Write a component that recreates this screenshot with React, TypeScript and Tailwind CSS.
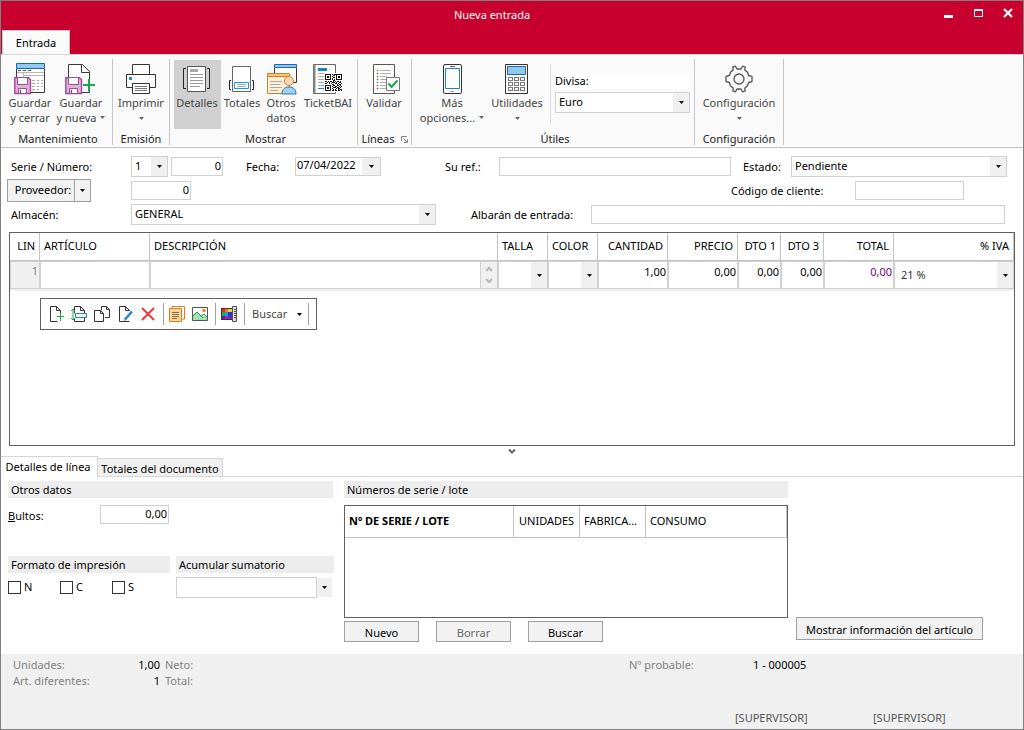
import React from "react";
import type { ReactNode } from "react";

const qrRows = [
  "11111101011111111",
  "10000100110100001",
  "10110101000101101",
  "10110100110101101",
  "10000101000100001",
  "11111101010111111",
  "00000000110000000",
  "11010110101011010",
  "00101001110100110",
  "11001010001101001",
  "00000001100010110",
  "11111100110011010",
  "10000101001100101",
  "10110100111011010",
  "10110101000101100",
  "10000100101001011",
  "11111101101101101",
];

function Caret({ className = "text-black" }: { className?: string }) {
  return (
    <svg aria-hidden="true" width="5" height="3" viewBox="0 0 5 3" className={`shrink-0 ${className}`}>
      <path d="M0 0h5L2.5 3z" fill="currentColor" />
    </svg>
  );
}

function Floppy() {
  return (
    <g stroke="#a0489c" fill="#deb3db">
      <path d="M.8 14.8h13.7l2 2v13.7H.8z" strokeWidth="1.4" />
      <path d="M3.5 15v6.5h10V15" fill="#fff" />
      <path d="M4.5 30.5v-5h8v5z" fill="#fff" />
      <path d="M6.5 27v3" stroke="#555" strokeWidth="1.2" />
    </g>
  );
}

function Icon32({ children }: { children: ReactNode }) {
  return (
    <svg aria-hidden="true" width="32" height="32" viewBox="0 0 32 32" fill="none" className="shrink-0">
      {children}
    </svg>
  );
}

const SaveCloseIcon = () => (
  <Icon32>
    <path d="M2.5 6v23.5h28V6" fill="#fff" stroke="#3a3a3a" />
    <path d="M2.5.5h28v5h-28z" fill="#92c8f0" stroke="#0f68b4" />
    <path d="M4 7.5h3M9 7.5h3M14 7.5h3" stroke="#555" />
    <path d="M3 9.5h27M9.500 10v5M9 12.500h21" stroke="#b8b8b8" />
    <path d="M18 17.500h3M23 17.500h2M27 17.500h2M18 20.500h3M23 20.500h2M27 20.500h2M18 23.500h3M23 23.500h2M27 23.500h2M18 26.500h3M23 26.500h2" stroke="#a8a8a8" />
    <Floppy />
  </Icon32>
);

const SaveNewIcon = () => (
  <Icon32>
    <path d="M3.500 15V1.500h14l7 7V17M24.500 28v1.500H17" fill="#fff" stroke="#3a3a3a" />
    <path d="M16.500 1.500v8h8" stroke="#3a3a3a" />
    <Floppy />
    <path d="M24 16v12M18 22h12" stroke="#16a750" strokeWidth="2" />
  </Icon32>
);

const PrintIcon = () => (
  <Icon32>
    <path d="M7.500 11V1.500h17V11" fill="#fff" stroke="#333" />
    <path d="M1.500 11.500h29v13h-29z" fill="#fff" stroke="#333" />
    <path d="M7.500 20.500h17v10h-17z" fill="#fff" stroke="#333" />
    <path d="M4 14h3v3H4z" fill="#1e88d2" />
    <path d="M10 23.500h12M10 25.500h12M10 27.500h12" stroke="#777" />
  </Icon32>
);

const DetailsIcon = () => (
  <Icon32>
    <path d="M6.500 3.500h18v25h-18z" fill="#fff" stroke="#555" />
    <path d="M9 6h8v3H9z" fill="#aaa" />
    <path d="M9 11.500h13M9 14.500h13M9 17.500h13M9 20.500h13M9 23.500h10" stroke="#999" />
    <path d="M5 5.500H2.500v20H5M26 5.500h2.500v20H26" stroke="#222" />
  </Icon32>
);

const TotalsIcon = () => (
  <Icon32>
    <path d="M6.500 3.500h18v25h-18z" fill="#fff" stroke="#666" />
    <path d="M5 17.500H3.500v9H5M26 17.500h1.500v9H26" stroke="#222" />
    <path d="M8.500 19.500h14v6h-14z" fill="#fff" stroke="#149bdb" />
    <path d="M11 21.500h9M11 23.500h9" stroke="#aaa" />
  </Icon32>
);

const OtherIcon = () => (
  <Icon32>
    <path d="M9.500 5v14.500h22V5" fill="#fff" stroke="#333" />
    <path d="M9.500 1.500h22v3h-22z" fill="#8fc6ee" stroke="#1769b0" />
    <path d="M2.500 14v16.500h22V14" fill="#fcefd6" stroke="#c98233" />
    <path d="M2.500 10.500h22v3h-22z" fill="#f7c67e" stroke="#e07b1c" />
    <path d="M5 18.500h12M5 21.500h10M5 24.500h12M5 27.500h8" stroke="#aaa" />
    <path d="M17 31c0-5 3-7 7-7s7 2 7 7z" fill="#a5cfee" stroke="#2b78b5" />
    <circle cx="24" cy="18" r="4.500" fill="#fbd9b5" stroke="#cf8443" />
  </Icon32>
);

const TicketIcon = () => (
  <Icon32>
    <path d="M1.500 1.500h22V30.500h-22z" fill="#fff" stroke="#666" />
    <path d="M2.500 2v28" stroke="#888" strokeWidth="2" />
    <path d="M6 5h9v3H6zM6 25h7v1H6z" fill="#1c84c6" />
    <path d="M6 10.500h12M6 13.500h10M6 16.500h7M6 19.500h7M6 22.500h7" stroke="#aaa" />
    <path d="M12 10h19v19H12z" fill="#fff" />
    <g transform="translate(13 11)" fill="#111">
      {qrRows.map((row, y) =>
        row.split("").map((c, x) => (c === "1" ? <rect key={`${x}-${y}`} x={x} y={y} width="1" height="1" /> : null)),
      )}
    </g>
  </Icon32>
);

const ValidateIcon = () => (
  <Icon32>
    <path d="M5.500 1.500h21v29h-21z" fill="#fff" stroke="#555" />
    <path d="M12 7.500h11M12 10.500h11M12 13.500h7M12 16.500h6M12 19.500h6M12 22.500h6M12 25.500h9" stroke="#b0b0b0" />
    <path d="M9 7h1v1H9zM9 13h1v1H9zM9 19h1v1H9z" fill="#15a34a" stroke="#15a34a" strokeWidth=".5" />
    <path d="M9 10h1v1H9zM9 16h1v1H9zM9 22h1v1H9zM9 25h1v1H9z" fill="#c3334d" stroke="#c3334d" strokeWidth=".5" />
    <path d="M18.500 14.500h13v13h-13z" fill="#fff" stroke="#777" />
    <path d="M20.500 20.500l3 3.500 6-6.500" stroke="#16a34a" strokeWidth="2" />
  </Icon32>
);

const PhoneIcon = () => (
  <Icon32>
    <rect x="7.500" y="1.500" width="18" height="29" rx="1.500" fill="#fff" stroke="#333" />
    <path d="M9.500 5.500h14v20h-14z" fill="#fff" stroke="#1c84c6" />
    <path d="M14 3.500h5M15.500 28.500h2" stroke="#666" />
  </Icon32>
);

const CalcIcon = () => (
  <Icon32>
    <path d="M4.500 1.500h22v29h-22z" fill="#fff" stroke="#333" />
    <path d="M6.500 3.500h18v8h-18z" fill="#92c8f0" stroke="#1769b0" />
    <g stroke="#777">
      {[14.5, 19.5, 24.5].map((y) => [7.5, 13.5, 19.5].map((x) => <rect key={`${x}-${y}`} x={x} y={y} width="4" height="3" />))}
    </g>
  </Icon32>
);

const GearIcon = () => (
  <Icon32>
    <g stroke="#555" strokeWidth="1.300" strokeLinejoin="round">
      <path d="M10.300 6.700 9.700 4.200 12.500 3.200 14 6h4l1.500-2.800 2.800 1-.6 2.500 2.800 2.600 1.100 3.200 3.400.9v5.200l-3.400.9-1.100 3.200-2.800 2.600.6 2.500-2.800 1L18 26h-4l-1.500 2.800-2.800-1 .6-2.500-2.800-2.600-1.100-3.200L3 18.600v-5.200l3.400-.9 1.100-3.200z" />
      <circle cx="16" cy="16" r="5" />
    </g>
  </Icon32>
);

function RibbonButton({
  icon,
  lines,
  width,
  caret = false,
  active = false,
}: {
  icon: ReactNode;
  lines: string[];
  width: string;
  caret?: boolean;
  active?: boolean;
}) {
  const caretOwnLine = caret && lines.length === 1;
  return (
    <button type="button" className={`flex h-[69px] shrink-0 flex-col items-center pt-[3px] text-[#444] ${width} ${active ? "bg-[#d0d0d0]" : ""}`}>
      {icon}
      {lines.map((line, i) => (
        <span key={line} className="flex items-center gap-1 whitespace-nowrap leading-[15px]">
          {line}
          {caret && i === 1 && <Caret className="text-[#666]" />}
        </span>
      ))}
      {caretOwnLine && (
        <span className="flex h-4 items-center">
          <Caret className="text-[#666]" />
        </span>
      )}
    </button>
  );
}

function Group({ label, width, children, launcher = false }: { label: string; width: string; children: ReactNode; launcher?: boolean }) {
  return (
    <section aria-label={label} className={`flex shrink-0 flex-col border-r border-[#c6c6c6] pt-px ${width}`}>
      <div className="flex">{children}</div>
      <div className="mt-1 flex items-center justify-center gap-1.5 leading-3 text-[#222]">
        {label}
        {launcher && (
          <button type="button" aria-label="Más opciones de líneas">
            <svg aria-hidden="true" width="7" height="7" viewBox="0 0 7 7" fill="none" stroke="#888">
              <path d="M.5 5V.5H6M2.500 2.500l3.500 3.500M6.500 3v3.500H3" />
            </svg>
          </button>
        )}
      </div>
    </section>
  );
}

function Select({ id, value, className }: { id: string; value: string; className: string }) {
  return (
    <div className={`relative h-[21px] border border-[#d0d0d0] bg-white ${className}`}>
      <select id={id} defaultValue={value} className="block h-full w-full appearance-none bg-transparent pl-[3px] pr-4 outline-none">
        <option>{value}</option>
      </select>
      <span className="pointer-events-none absolute inset-y-0 right-0 flex w-4 items-center justify-center bg-[#f0f0f0]">
        <Caret />
      </span>
    </div>
  );
}

const field = "h-[19px] min-w-0 border border-[#d0d0d0] bg-white px-px pb-0.5 outline-none";

const MiniIcon = ({ children }: { children: ReactNode }) => (
  <svg aria-hidden="true" width="16" height="16" viewBox="0 0 16 16" fill="none">
    {children}
  </svg>
);

const tools: { name: string; icon: ReactNode; divider?: boolean }[] = [
  {
    name: "Nueva línea",
    icon: (
      <MiniIcon>
        <path d="M12.500 8V4.500l-4-4h-6v15h7" fill="#fff" stroke="#333" />
        <path d="M8.500.5v4h4" stroke="#333" />
        <path d="M12.500 7v8M8.500 10.500h7.500" stroke="#16a750" />
      </MiniIcon>
    ),
  },
  {
    name: "Insertar línea",
    icon: (
      <MiniIcon>
        <path d="M3.500 7V.5h6l4 4V7M3.500 12v3.500h10V12M9.500.5v4h4" stroke="#333" />
        <path d="M4.500 7.500h11v4h-11z" fill="#fff" stroke="#1c84c6" />
        <path d="M2 3v11M0 5l2-2 2 2M0 12l2 2 2-2" stroke="#16a750" />
      </MiniIcon>
    ),
  },
  {
    name: "Duplicar línea",
    icon: (
      <MiniIcon>
        <path d="M7.500 4V.5h5l3 3v8H11M12.500.5v3h3" stroke="#333" />
        <path d="M.5 4.500h6l3 3v8h-9zM6.500 4.500v3h3" fill="#fff" stroke="#333" />
      </MiniIcon>
    ),
  },
  {
    name: "Modificar línea",
    icon: (
      <MiniIcon>
        <path d="M12.500 5V4.500l-4-4h-6v15h10M8.500.5v4h4" stroke="#333" />
        <path d="M8 13.500l7-8" stroke="#2f86c9" strokeWidth="2.500" />
        <path d="M7 15l1-2.500 1.500 1.500z" fill="#777" />
      </MiniIcon>
    ),
  },
  {
    name: "Borrar línea",
    icon: (
      <MiniIcon>
        <path d="M2 2l12 12M14 2L2 14" stroke="#ee3a3a" strokeWidth="2" />
      </MiniIcon>
    ),
    divider: true,
  },
  {
    name: "Notas",
    icon: (
      <MiniIcon>
        <path d="M3 2.500V.5h12.500V13H13" stroke="#e07b1c" />
        <path d="M.5 2.500h12v13H.5z" fill="#fbd9a0" stroke="#e07b1c" />
        <path d="M3 6.500h7M3 8.500h7M3 10.500h7M3 12.500h5" stroke="#8d6b45" />
      </MiniIcon>
    ),
  },
  {
    name: "Imagen",
    icon: (
      <MiniIcon>
        <path d="M.5 1.500h15v13H.5z" fill="#fff" stroke="#555" />
        <path d="M1 10l4-4 5 5 2.500-2 2.500 2v3H1z" fill="#a4dfb5" />
        <path d="M1 10l4-4 6 6M9 10.500l3-2.500 3 3" stroke="#169447" />
        <circle cx="12" cy="4.500" r="1.800" fill="#e87e35" />
      </MiniIcon>
    ),
    divider: true,
  },
  {
    name: "Tallas y colores",
    icon: (
      <MiniIcon>
        <path d="M0 2h11v12H0z" fill="#333" />
        <path d="M1 3h3v3H1z" fill="#e5252a" />
        <path d="M4 3h3v3H4z" fill="#f07820" />
        <path d="M7 3h4v3H7z" fill="#f7ce22" />
        <path d="M1 6h3v4H1z" fill="#2ba84a" />
        <path d="M4 6h3v4H4z" fill="#159de0" />
        <path d="M7 6h4v4H7z" fill="#2739c9" />
        <path d="M1 10h3v3H1z" fill="#5724ad" />
        <path d="M4 10h3v3H4z" fill="#a824b2" />
        <path d="M7 10h4v3H7z" fill="#7a24b8" />
        <path d="M11.500.5h4v15h-4z" fill="#ddd" stroke="#555" />
        <path d="M13 3.500h2M13 5.500h2M13 7.500h2M13 9.500h2M13 11.500h2" stroke="#555" />
      </MiniIcon>
    ),
    divider: true,
  },
];

const th = "h-7 border-b border-r border-[#c3c3c3] font-normal whitespace-nowrap";
const td = "h-7 border border-[#d0d0d0] p-0 align-top";
const cellInput = "block h-[18px] w-full min-w-0 bg-transparent px-px text-right outline-none";

function CellSelect({ label, value }: { label: string; value: string }) {
  return (
    <div className="relative h-[26px]">
      <select aria-label={label} defaultValue={value} className="block h-full w-full appearance-none bg-transparent pl-1.5 pr-4 text-[#333] outline-none">
        <option>{value}</option>
      </select>
      <span className="pointer-events-none absolute inset-y-0 right-0 flex w-4 items-center justify-center bg-[#f0f0f0]">
        <Caret />
      </span>
    </div>
  );
}

const button = "h-[21px] w-[75px] border border-[#a0a0a0] bg-[#f2f2f2] leading-[21px]";
const sectionTitle = "h-[17px] bg-[#ededed] pl-[3px] leading-[18px]";

export default function App() {
  return (
    <div className="flex min-h-screen min-w-[1024px] flex-col border border-[#808080] bg-white font-['Noto_Sans',sans-serif] text-[11px] text-black">
      <header className="bg-[#c8002d]">
        <div className="flex h-[29px] items-center text-white">
          <h1 className="flex-1 pl-10 text-center">Nueva entrada</h1>
          <div className="flex items-start gap-5 pr-2.5 pb-[5px]">
            <button type="button" aria-label="Minimizar">
              <svg width="10" height="10" viewBox="0 0 10 10"><path d="M1 7h9v3H1z" fill="#fff" /></svg>
            </button>
            <button type="button" aria-label="Maximizar">
              <svg width="10" height="10" viewBox="0 0 10 10"><path d="M1.500 1.500h8v7h-8zM1.500 2.500h8" fill="none" stroke="#fff" /></svg>
            </button>
            <button type="button" aria-label="Cerrar">
              <svg width="10" height="10" viewBox="0 0 10 10"><path d="M1 1l8 8M9 1L1 9" stroke="#fff" strokeWidth="2.200" /></svg>
            </button>
          </div>
        </div>
        <nav className="flex pl-px">
          <button type="button" className="h-6 w-[68px] border-x border-t border-[#c6c6c6] bg-[#fafafa] pt-0.5">Entrada</button>
        </nav>
      </header>

      <div className="flex border-y border-t-[#d8d8d8] border-b-[#c6c6c6] bg-[#fafafa] pt-1 pb-0.5">
        <Group label="Mantenimiento" width="w-28 pl-[3px]">
          <RibbonButton icon={<SaveCloseIcon />} lines={["Guardar", "y cerrar"]} width="w-[52px]" />
          <RibbonButton icon={<SaveNewIcon />} lines={["Guardar", "y nueva"]} width="w-[50px]" caret />
        </Group>
        <Group label="Emisión" width="w-[57px]">
          <RibbonButton icon={<PrintIcon />} lines={["Imprimir"]} width="w-[56px]" caret />
        </Group>
        <Group label="Mostrar" width="w-[188px] pl-1">
          <RibbonButton icon={<DetailsIcon />} lines={["Detalles"]} width="w-[47px] pr-px" active />
          <RibbonButton icon={<TotalsIcon />} lines={["Totales"]} width="w-[42px]" />
          <RibbonButton icon={<OtherIcon />} lines={["Otros", "datos"]} width="w-[37px] pr-px" />
          <RibbonButton icon={<TicketIcon />} lines={["TicketBAI"]} width="w-[56px]" />
        </Group>
        <Group label="Líneas" width="w-[54px]" launcher>
          <RibbonButton icon={<ValidateIcon />} lines={["Validar"]} width="w-[53px] pr-px" />
        </Group>
        <Group label="Útiles" width="w-[283px] pl-1">
          <RibbonButton icon={<PhoneIcon />} lines={["Más", "opciones..."]} width="w-[72px]" caret />
          <RibbonButton icon={<CalcIcon />} lines={["Utilidades"]} width="w-[58px]" caret />
          <div className="my-1 ml-1 flex flex-col gap-[3px] border-l border-[#dcdcdc] pl-1 pt-[9px]">
            <label htmlFor="divisa" className="w-[135px] bg-white leading-4">Divisa:</label>
            <Select id="divisa" value="Euro" className="w-[135px]" />
          </div>
        </Group>
        <Group label="Configuración" width="w-[89px]">
          <RibbonButton icon={<GearIcon />} lines={["Configuración"]} width="w-[88px]" caret />
        </Group>
      </div>

      <main className="flex flex-1 flex-col pt-1.5">
        <form className="pr-4" onSubmit={(e) => e.preventDefault()}>
          <div className="flex h-6 items-center pl-2.5">
            <label htmlFor="serie" className="w-[120px] pt-0.5">Serie / Número:</label>
            <Select id="serie" value="1" className="w-[37px]" />
            <input aria-label="Número" defaultValue="0" className={`ml-[3px] w-[52px] text-right ${field}`} />
            <label htmlFor="fecha" className="ml-[23px] w-[49px] pt-0.5">Fecha:</label>
            <div className="flex h-[19px] w-[86px] border border-[#d0d0d0]">
              <input id="fecha" defaultValue="07/04/2022" className="min-w-0 flex-1 pb-0.5 pl-px outline-none" />
              <button type="button" aria-label="Abrir calendario" className="flex w-[18px] items-center justify-center bg-[#f0f0f0]"><Caret /></button>
            </div>
            <label htmlFor="ref" className="ml-16 w-[54px] pt-0.5">Su ref.:</label>
            <input id="ref" className={`flex-1 ${field}`} />
            <label htmlFor="estado" className="ml-3 w-12 pt-0.5">Estado:</label>
            <Select id="estado" value="Pendiente" className="w-[216px]" />
          </div>
          <div className="flex h-6 items-center pl-1.5">
            <div className="flex h-[23px] w-[84px] border border-[#a0a0a0] bg-[#f2f2f2]">
              <button type="button" className="flex-1 border-r border-[#a0a0a0] pl-1">Proveedor:</button>
              <button type="button" aria-label="Opciones de proveedor" className="flex w-[15px] items-center justify-center"><Caret /></button>
            </div>
            <input aria-label="Código de proveedor" defaultValue="0" className={`ml-10 w-[60px] text-right ${field}`} />
            <label htmlFor="cliente" className="ml-auto w-[124px] pt-0.5">Código de cliente:</label>
            <input id="cliente" className={`mr-[43px] w-[109px] ${field}`} />
          </div>
          <div className="flex h-6 items-center pl-2.5">
            <label htmlFor="almacen" className="w-[120px] pt-0.5">Almacén:</label>
            <Select id="almacen" value="GENERAL" className="w-[305px]" />
            <label htmlFor="albaran" className="ml-[35px] w-[120px] pt-0.5">Albarán de entrada:</label>
            <input id="albaran" className={`mr-0.5 flex-1 ${field}`} />
          </div>
        </form>

        <section aria-label="Líneas del documento" className="mx-2 mt-1.5 flex-1 border border-[#606060]">
          <div className="border-b-2 border-[#f0f0f0]">
            <table className="w-full table-fixed border-separate border-spacing-0">
              <colgroup>
                <col className="w-[30px]" />
                <col className="w-[110px]" />
                <col />
                <col className="w-[50px]" />
                <col className="w-[50px]" />
                <col className="w-[70px]" />
                <col className="w-[70px]" />
                <col className="w-[43px]" />
                <col className="w-[43px]" />
                <col className="w-[70px]" />
                <col className="w-[120px]" />
              </colgroup>
              <thead>
                <tr>
                  <th className={`${th} pr-1 text-right`}>LIN</th>
                  <th className={`${th} pl-1 text-left`}>ARTÍCULO</th>
                  <th className={`${th} pl-1 text-left`}>DESCRIPCIÓN</th>
                  <th className={`${th} pl-1 text-left`}>TALLA</th>
                  <th className={`${th} pl-1 text-left`}>COLOR</th>
                  <th className={`${th} pr-1 text-right`}>CANTIDAD</th>
                  <th className={`${th} pr-1 text-right`}>PRECIO</th>
                  <th className={`${th} pr-1 text-right`}>DTO 1</th>
                  <th className={`${th} pr-1 text-right`}>DTO 3</th>
                  <th className={`${th} pr-1 text-right`}>TOTAL</th>
                  <th className={`${th} pr-1 text-right`}>% IVA</th>
                </tr>
              </thead>
              <tbody>
                <tr>
                  <td className={`${td} bg-[#f0f0f0] pr-px text-right leading-[18px] text-[#808080]`}>1</td>
                  <td className={td}><input aria-label="Artículo" className={cellInput} /></td>
                  <td className={td}>
                    <div className="flex h-[26px]">
                      <input aria-label="Descripción" className="min-w-0 flex-1 border-r border-[#d0d0d0] px-1 outline-none" />
                      <div className="flex w-4 flex-col items-center justify-between bg-[#f0f0f0] py-1">
                        <button type="button" aria-label="Subir" className="block">
                          <svg className="block" width="8" height="6" viewBox="0 0 8 6" fill="none" stroke="#b8b8b8" strokeWidth="2"><path d="M1 5l3-3 3 3" /></svg>
                        </button>
                        <button type="button" aria-label="Bajar" className="block">
                          <svg className="block" width="8" height="6" viewBox="0 0 8 6" fill="none" stroke="#b8b8b8" strokeWidth="2"><path d="M1 1l3 3 3-3" /></svg>
                        </button>
                      </div>
                    </div>
                  </td>
                  <td className={td}><CellSelect label="Talla" value="" /></td>
                  <td className={td}><CellSelect label="Color" value="" /></td>
                  <td className={td}><input aria-label="Cantidad" defaultValue="1,00" className={cellInput} /></td>
                  <td className={td}><input aria-label="Precio" defaultValue="0,00" className={cellInput} /></td>
                  <td className={td}><input aria-label="Descuento 1" defaultValue="0,00" className={cellInput} /></td>
                  <td className={td}><input aria-label="Descuento 3" defaultValue="0,00" className={cellInput} /></td>
                  <td className={td}><input aria-label="Total" defaultValue="0,00" className={`${cellInput} text-[#800080]`} /></td>
                  <td className={td}><CellSelect label="IVA" value="21 %" /></td>
                </tr>
              </tbody>
            </table>
          </div>
          <div role="toolbar" aria-label="Acciones de línea" className="mt-[7px] ml-[30px] flex h-8 w-[277px] items-center border border-[#606060] pl-[7px]">
            {tools.map((t) => (
              <React.Fragment key={t.name}>
                <button type="button" aria-label={t.name} className={t.divider ? "" : "mr-[7px]"}>{t.icon}</button>
                {t.divider && <span className="mr-[5px] ml-[7px] h-[22px] w-px bg-[#a0a0a0]" />}
              </React.Fragment>
            ))}
            <button type="button" className="flex items-center gap-2.5 px-0.5 text-[#444]">
              Buscar <Caret />
            </button>
            <span className="ml-1 h-[22px] w-px bg-[#a0a0a0]" />
          </div>
        </section>

        <div className="flex h-2.5 items-center justify-center">
          <svg aria-hidden="true" width="8" height="5" viewBox="0 0 8 5" fill="none" stroke="#666" strokeWidth="2"><path d="M1 .5l3 3 3-3" /></svg>
        </div>

        <div role="tablist" className="flex items-end border-b border-[#d6d6d6]">
          <button type="button" role="tab" aria-selected="true" className="-mb-px h-[21px] w-[97px] border-t border-r border-[#d6d6d6] bg-white pr-0.5">Detalles de línea</button>
          <button type="button" role="tab" aria-selected="false" className="h-[18px] w-[125px] border-t border-r border-[#d6d6d6] bg-[#f0f0f0] pt-0.5">Totales del documento</button>
        </div>

        <div className="flex h-[177px] pt-1 pl-[7px]">
          <div className="w-[326px]">
            <h2 className={`${sectionTitle} w-[325px]`}>Otros datos</h2>
            <div className="mt-[7px] flex h-[19px] items-center">
              <label htmlFor="bultos" className="w-[92px] pt-[3px]"><u>B</u>ultos:</label>
              <input id="bultos" defaultValue="0,00" className={`w-[69px] text-right ${field}`} />
            </div>
            <div className="mt-8 flex gap-1.5">
              <fieldset className="w-[162px]">
                <legend className={`w-full ${sectionTitle}`}>Formato de impresión</legend>
                <div className="mt-1 flex h-[21px] items-center">
                  {["N", "C", "S"].map((n) => (
                    <label key={n} className="flex w-[52px] items-center gap-[3px]">
                      <input type="checkbox" className="size-[13px] appearance-none border border-[#333] bg-white checked:bg-[#333]" />
                      {n}
                    </label>
                  ))}
                </div>
              </fieldset>
              <div className="w-[158px]">
                <label htmlFor="acumular" className={`block ${sectionTitle}`}>Acumular sumatorio</label>
                <div className="relative mt-1 h-[21px] w-[156px] pr-[15px]">
                  <select id="acumular" className="block h-full w-full appearance-none border border-[#d0d0d0] bg-white outline-none">
                    <option></option>
                  </select>
                  <span className="pointer-events-none absolute inset-y-px right-0 flex w-[15px] items-center justify-center bg-[#f0f0f0]">
                    <Caret />
                  </span>
                </div>
              </div>
            </div>
          </div>

          <div className="ml-2.5 w-[444px]">
            <h2 className={sectionTitle}>Números de serie / lote</h2>
            <div className="mt-[7px] h-[113px] border border-[#606060]">
              <table className="w-full table-fixed border-separate border-spacing-0">
                <thead>
                  <tr className="h-8 text-left whitespace-nowrap">
                    <th className="w-[169px] border-r border-b border-[#c3c3c3] pl-1 font-bold">Nº DE SERIE / LOTE</th>
                    <th className="w-[66px] border-r border-b border-[#c3c3c3] pl-[5px] font-normal">UNIDADES</th>
                    <th className="w-[66px] border-r border-b border-[#c3c3c3] pl-1 font-normal">FABRICA...</th>
                    <th className="border-r border-b border-[#c3c3c3] pl-1 font-normal">CONSUMO</th>
                  </tr>
                </thead>
              </table>
            </div>
            <div className="mt-[3px] flex gap-[17px]">
              <button type="button" className={button}>Nuevo</button>
              <button type="button" className={`${button} text-[#666]`}>Borrar</button>
              <button type="button" className={button}>Buscar</button>
            </div>
          </div>

          <div className="flex flex-col justify-end pb-3.5 pl-2">
            <button type="button" className="h-[23px] w-[187px] border border-[#a0a0a0] bg-[#f2f2f2] leading-[23px]">Mostrar información del artículo</button>
          </div>
        </div>
      </main>

      <footer className="flex h-[75px] flex-col justify-between bg-[#f0f0f0] pt-[3px] pb-[3px] leading-4 text-[#808080]">
        <div className="flex pl-3">
          <dl className="grid grid-cols-[108px_39px_1fr]">
            <dt>Unidades:</dt><dd className="text-right text-black">1,00</dd><dt className="pl-[5px]">Neto:</dt>
            <dt>Art. diferentes:</dt><dd className="text-right text-black">1</dd><dt className="pl-[5px]">Total:</dt>
          </dl>
          <div className="ml-auto flex w-[394px]">
            <span className="w-[124px]">Nº probable:</span>
            <span className="text-black">1 - 000005</span>
          </div>
        </div>
        <div className="flex justify-end text-[#555]">
          <span className="w-[138px]">[SUPERVISOR]</span>
          <span className="w-[150px]">[SUPERVISOR]</span>
        </div>
      </footer>
    </div>
  );
}
